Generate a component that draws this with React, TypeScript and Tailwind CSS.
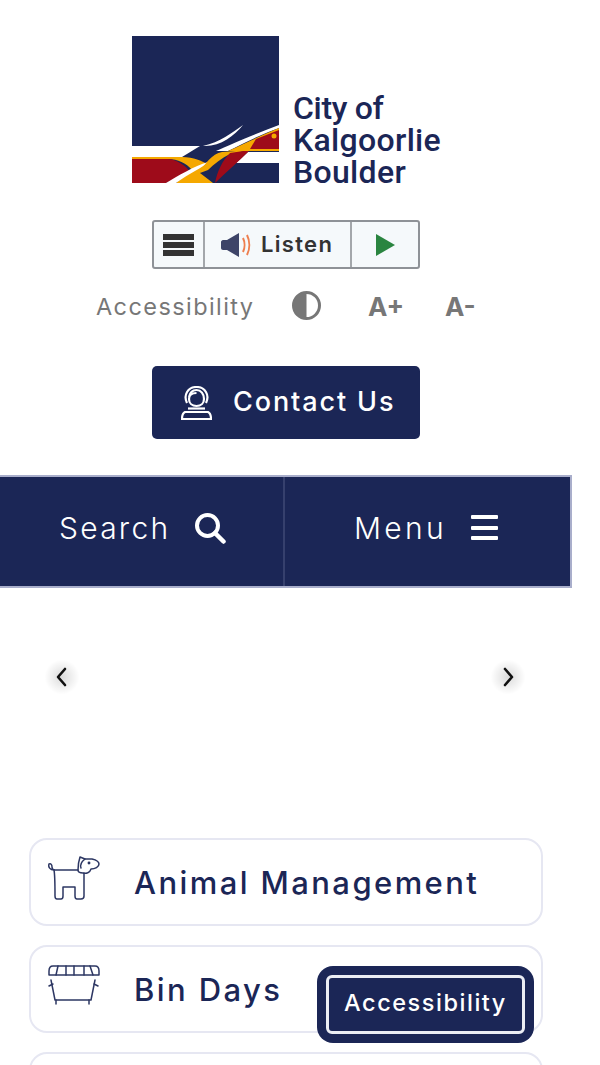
function LogoMark() {
  return (
    <svg width="147" height="147" viewBox="0 0 147 147" className="shrink-0">
      <rect width="147" height="147" fill="#1b2656" />
      <path d="M0 110H68L50 121H0Z" fill="#fff" />
      <path d="M116 116H147V127H104Z" fill="#fff" />
      <path d="M0 121H50C62 121 70 125 75 128L68 137L81 147H44L60 134C54 127 46 123 36 123H0Z" fill="#f5a800" />
      <path d="M0 123H36C46 124 54 130 58 136L34 147H0Z" fill="#9e0b1a" />
      <path d="M34 147C46 140 62 130 76 126C70 132 58 137 44 147Z" fill="#fff" />
      <path d="M68 137C72 128 80 118 90 116L118 114L98 118C90 122 82 128 76 134Z" fill="#f5a800" />
      <path d="M118 114L98 117C90 125 85 136 83 147C94 136 106 126 118 114Z" fill="#9e0b1a" />
      <path d="M147 89C125 97 100 108 84 115H96C110 108 130 98 147 92Z" fill="#fff" />
      <path d="M147 92C128 100 112 108 96 115H147Z" fill="#f5a800" />
      <path d="M147 94L124 103L118 113H147Z" fill="#9e0b1a" />
      <circle cx="142" cy="100" r="2.5" fill="#f5a800" />
      <path d="M111 89C102 100 88 111 71 110C88 106 100 97 111 89Z" fill="#fff" />
    </svg>
  );
}

function Dog() {
  return (
    <svg width="52" height="46" viewBox="0 0 52 46" fill="none" stroke="#2d3763" strokeWidth="1.5" strokeLinejoin="round" strokeLinecap="round" className="shrink-0">
      <path d="M6 15C2 15 0 12 1 9C3 8 4 10 4 12C4 14 5 15 7 15H30" />
      <path d="M6 15C7 20 7 25 7 41C7 43 8 44 9 44H13C14 44 15 43 15 41V32H27V41C27 43 28 44 29 44H33C35 44 36 43 36 41V18" />
      <path d="M30 15C30 10 31 5 32 2L37 4H44C48 5 51 6 51 9C51 12 47 14 43 14C42 17 39 19 35 18C32 18 30 17 30 15Z" />
      <path d="M37 4C33 7 32 10 33 13" />
      <circle cx="41" cy="8" r="0.7" fill="#2d3763" />
    </svg>
  );
}

function Bin() {
  return (
    <svg width="52" height="40" viewBox="0 0 52 40" fill="none" stroke="#2d3763" strokeWidth="1.5" strokeLinejoin="round" strokeLinecap="round" className="mt-[3px] shrink-0">
      <path d="M5 1H47C50 1 51 3 51 6V10H1V6C1 3 2 1 5 1Z" />
      <path d="M10 1L8 10M18 1V10M26 1V10M36 1V10M42 1L45 10" />
      <path d="M3 15L7 35H43L47 15" />
      <path d="M1 21L5 19M50 21L46 19M8 35V39M41 35V39" />
    </svg>
  );
}

function Card({ icon, label }: { icon: React.ReactNode; label?: string }) {
  return (
    <div className="h-[88px] shrink-0 rounded-[18px] border-2 border-[#e6e7f2] bg-white flex">
      <div className="w-[103px] shrink-0 pl-[17px] pt-[15px]">{icon}</div>
      {label && (
        <span className="text-[31px] font-medium tracking-[0.078em] leading-[86px] text-[#1b2656] whitespace-nowrap">{label}</span>
      )}
    </div>
  );
}

function Arrow({ d }: { d: string }) {
  return (
    <span className="w-[36px] h-[40px] flex items-center justify-center rounded-full bg-[radial-gradient(circle,rgba(0,0,0,0.14)_0%,rgba(0,0,0,0)_65%)]">
      <svg width="14" height="22" viewBox="0 0 14 22" fill="none" stroke="#111" strokeWidth="2.6" strokeLinecap="round" strokeLinejoin="round">
        <path d={d} />
      </svg>
    </span>
  );
}

export default function App() {
  return (
    <div className="relative w-[600px] h-[1065px] overflow-hidden bg-white font-['Inter','Liberation_Sans',sans-serif]">
      <div className="w-[572px]">
        {/* Logo */}
        <div className="pt-[36px] pl-[132px] flex">
          <LogoMark />
          <div className="ml-[14px] flex flex-col pt-[56px] h-[147px] text-[#1b2656] font-['Roboto',sans-serif] font-medium text-[32px] leading-[32px] w-[148px] whitespace-nowrap">
            <span className="tracking-[-0.01em]">City of</span>
            <span className="tracking-[0.01em]">Kalgoorlie</span>
            <span className="tracking-[0.01em]">Boulder</span>
          </div>
        </div>

        {/* Listen */}
        <div className="mt-[37px] ml-[152px] w-[268px] h-[49px] flex rounded-[3px] border-2 border-[#8e9297] bg-[#f5f9fb]">
          <div className="w-[51px] flex items-center justify-center border-r-2 border-[#a3a7ab]">
            <div className="w-[31px] flex flex-col gap-[2px]">
              <span className="h-[6px] bg-[#333]" />
              <span className="h-[6px] bg-[#333]" />
              <span className="h-[6px] bg-[#333]" />
            </div>
          </div>
          <div className="w-[147px] flex items-center border-r-2 border-[#a3a7ab] pl-[16px]">
            <svg width="32" height="26" viewBox="0 0 32 26" className="shrink-0">
              <path d="M0 10C0 9 1 8 2 8H6L18 1V25L6 18H2C1 18 0 17 0 16Z" fill="#3d4468" />
              <path d="M22 6C24 10 24 16 22 20" fill="none" stroke="#ee7f4f" strokeWidth="2" />
              <path d="M26 3C29 9 29 17 26 23" fill="none" stroke="#ee7f4f" strokeWidth="2" />
            </svg>
            <span className="ml-[8px] text-[22px] font-semibold tracking-[0.06em] text-[#333]">Listen</span>
          </div>
          <div className="flex-1 flex items-center justify-center">
            <svg width="19" height="22" viewBox="0 0 19 22"><path d="M0 0L19 11L0 22Z" fill="#2a8540" /></svg>
          </div>
        </div>

        {/* Accessibility */}
        <div className="mt-[19px] h-[36px] flex items-center text-[#777] pl-[96px]">
          <span className="w-[196px] shrink-0 pt-[2px] text-[23.5px] tracking-[0.06em]">Accessibility</span>
          <svg width="29" height="29" viewBox="0 0 29 29" className="mb-[2px] shrink-0">
            <circle cx="14.5" cy="14.5" r="13" fill="#fff" stroke="#777" strokeWidth="3" />
            <path d="M14.5 1.5A13 13 0 0 0 14.5 27.5Z" fill="#777" />
          </svg>
          <span className="ml-[47px] w-[77px] text-[26px] font-bold">A+</span>
          <span className="text-[26px] font-bold">A-</span>
        </div>

        {/* Contact */}
        <div className="mt-[42px] ml-[152px] w-[268px] h-[73px] rounded-[5px] bg-[#1b2656] flex items-center pl-[29px] text-white">
          <svg width="31" height="34" viewBox="0 0 31 34" fill="none" stroke="#fff" strokeWidth="2.2" className="shrink-0">
            <path d="M6 17C2 9 7 1 15.5 1S29 9 25 17" />
            <path d="M8 11C9 6 12 4 15.5 4C20 4 23 8 23 13C23 17 20 20 15.5 20C11 20 8 17 8 13C8 9 11 7 15.5 7" />
            <path d="M7 22.5H24" />
            <path d="M4 26H27C29 27 30 29 30 33H1C1 29 2 27 4 26Z" />
          </svg>
          <span className="ml-[21px] text-[27px] font-medium tracking-[0.07em] whitespace-nowrap">Contact Us</span>
        </div>

        {/* Nav */}
        <div className="mt-[36px] h-[113px] flex bg-[#1b2656] border-y-2 border-r-2 border-[#a9aecb] text-white">
          <div className="w-[285px] flex items-center pl-[59px] pb-[6px] border-r-2 border-[#36406d]">
            <span className="w-[135px] shrink-0 text-[30px] font-light tracking-[0.075em]">Search</span>
            <svg width="32" height="32" viewBox="0 0 32 32" fill="none" stroke="#fff" className="mb-[2px] shrink-0" strokeLinecap="round">
              <circle cx="13.5" cy="13.5" r="10.5" strokeWidth="4" />
              <path d="M21 21L29.5 29.5" strokeWidth="4.5" />
            </svg>
          </div>
          <div className="flex-1 flex items-center pl-[69px] pb-[6px]">
            <span className="w-[117px] shrink-0 text-[30px] font-light tracking-[0.11em]">Menu</span>
            <div className="mb-[2px] w-[27px] flex flex-col gap-[6.5px]">
              <span className="h-[4px] rounded-[1px] bg-white" />
              <span className="h-[4px] rounded-[1px] bg-white" />
              <span className="h-[4px] rounded-[1px] bg-white" />
            </div>
          </div>
        </div>

        {/* Slider arrows */}
        <div className="mt-[69px] flex justify-between pl-[44px] pr-[46px]">
          <Arrow d="M10 3L3 11L10 19" />
          <Arrow d="M4 3L11 11L4 19" />
        </div>

        {/* Cards */}
        <div className="mt-[141px] mx-[29px] flex flex-col gap-[19px]">
          <Card icon={<Dog />} label="Animal Management" />
          <Card icon={<Bin />} label="Bin Days" />
          <Card icon={null} />
        </div>
      </div>

      {/* Floating accessibility button */}
      <div className="absolute left-[317px] top-[966px] w-[217px] h-[77px] rounded-[16px] bg-[#1b2656] p-[9px]">
        <div className="h-full rounded-[6px] border-[3px] border-[#eceef5] flex items-center justify-center pb-[3px] text-white text-[23.5px] font-medium tracking-[0.065em]">
          Accessibility
        </div>
      </div>
    </div>
  );
}
